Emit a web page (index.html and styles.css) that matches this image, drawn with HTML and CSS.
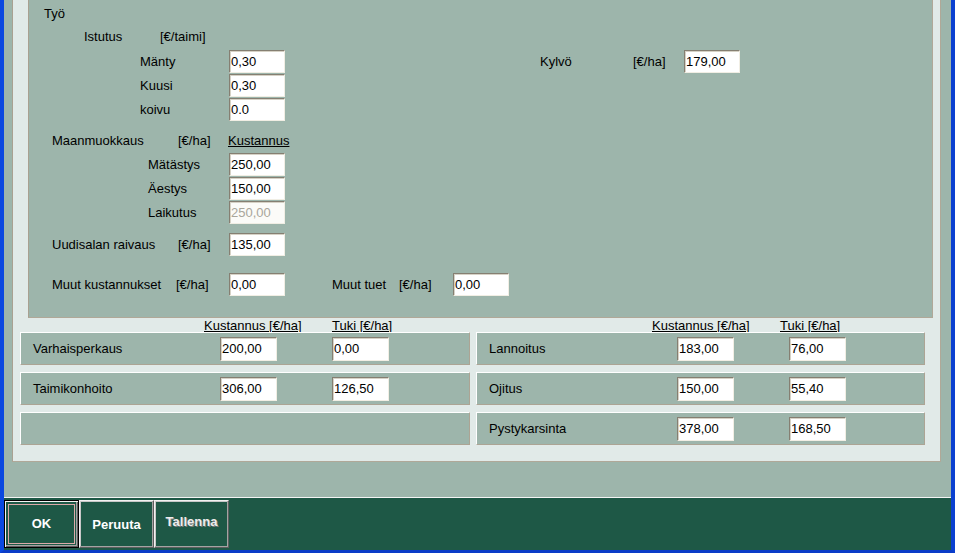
FILE: index.html
```html
<!DOCTYPE html>
<html lang="fi">
<head>
<meta charset="utf-8">
<title>Työ</title>
<link rel="stylesheet" href="styles.css">
</head>
<body>
<div class="win">
  <div class="content">
    <div class="lpanel">
      <div class="grp">
        <div class="row r-tyo"><span>Työ</span></div>
        <div class="row r-ist"><span class="w-ist">Istutus</span><span>[€/taimi]</span></div>
        <div class="row r-tree">
          <span class="w-tree">Mänty</span><input class="inp" value="0,30">
          <span class="w-kylvo">Kylvö</span><span class="w-kyha">[€/ha]</span><input class="inp" value="179,00">
        </div>
        <div class="row r-tree"><span class="w-tree">Kuusi</span><input class="inp" value="0,30"></div>
        <div class="row r-tree"><span class="w-tree">koivu</span><input class="inp" value="0.0"></div>
        <div class="row r-maan"><span class="w-maan">Maanmuokkaus</span><span class="w-maha">[€/ha]</span><span class="ul">Kustannus</span></div>
        <div class="row r-muok"><span class="w-muok">Mätästys</span><input class="inp" value="250,00"></div>
        <div class="row r-muok"><span class="w-muok">Äestys</span><input class="inp" value="150,00"></div>
        <div class="row r-muok"><span class="w-muok">Laikutus</span><input class="inp" value="250,00" disabled></div>
        <div class="row r-uud"><span class="w-maan">Uudisalan raivaus</span><span class="w-uha">[€/ha]</span><input class="inp" value="135,00"></div>
        <div class="row r-muut">
          <span class="w-muut">Muut kustannukset</span><span class="w-muha">[€/ha]</span><input class="inp" value="0,00">
          <span class="w-tuet">Muut tuet</span><span class="w-tuha">[€/ha]</span><input class="inp" value="0,00">
        </div>
      </div>
      <div class="heads">
        <div class="hcol hleft"><span class="hk ul">Kustannus [€/ha]</span><span class="ul">Tuki [€/ha]</span></div>
        <div class="hcol hright"><span class="hk ul">Kustannus [€/ha]</span><span class="ul">Tuki [€/ha]</span></div>
      </div>
      <div class="boxes">
        <div class="col">
          <div class="box"><span class="blab">Varhaisperkaus</span><input class="inp inp2" value="200,00"><input class="inp inp2 tuki" value="0,00"></div>
          <div class="box"><span class="blab">Taimikonhoito</span><input class="inp inp2" value="306,00"><input class="inp inp2 tuki" value="126,50"></div>
          <div class="box"></div>
        </div>
        <div class="col colr">
          <div class="box"><span class="blab blabr">Lannoitus</span><input class="inp inp2" value="183,00"><input class="inp inp2 tuki" value="76,00"></div>
          <div class="box"><span class="blab blabr">Ojitus</span><input class="inp inp2" value="150,00"><input class="inp inp2 tuki" value="55,40"></div>
          <div class="box"><span class="blab blabr">Pystykarsinta</span><input class="inp inp2" value="378,00"><input class="inp inp2 tuki" value="168,50"></div>
        </div>
      </div>
    </div>
  </div>
  <div class="bar">
    <div class="btn btn-ok">OK</div>
    <div class="btn">Peruuta</div>
    <div class="btn btn-dis">Tallenna</div>
  </div>
</div>
</body>
</html>
```

FILE: styles.css
```css
* { box-sizing: border-box; }
html, body { margin: 0; padding: 0; }
body {
  font-family: "Liberation Sans", Arial, sans-serif;
  font-size: 13px;
  color: #000;
  background: #0a46d8;
}
.win {
  width: 955px;
  height: 553px;
  border-left: 4px solid #0a48e0;
  border-right: 4px solid #0a40d0;
  border-bottom: 3px solid #0a3cc8;
  display: flex;
  flex-direction: column;
  overflow: hidden;
  background: #9db5ab;
}
.content {
  height: 497px;
  flex: none;
  background: #9db5ab;
  padding: 0 10px 0 8px;
}
.lpanel {
  height: 462px;
  background: #e1eae8;
  border-left: 1px solid #a9a191;
  border-right: 1px solid #b0a898;
  border-bottom: 1px solid #b0a898;
}
.grp {
  height: 318px;
  margin: 0 7px 0 15px;
  background: #9db5ab;
  border-left: 1px solid #a9a191;
  border-right: 1px solid #b0a898;
  border-bottom: 1px solid #b0a898;
}
.row { display: flex; align-items: center; white-space: nowrap; }
.row span { flex: none; }
.r-tyo { height: 26px; padding-left: 15px; }
.r-ist { height: 20px; padding-left: 55px; margin-bottom: 3px; }
.w-ist { width: 76px; }
.r-tree { height: 24px; padding-left: 111px; }
.w-tree { width: 89px; }
.w-kylvo { width: 93px; margin-left: 255px; }
.w-kyha { width: 51px; }
.r-maan { height: 20px; padding-left: 23px; margin-top: 9px; margin-bottom: 2px; }
.w-maan { width: 126px; }
.w-maha { width: 50px; }
.ul { text-decoration: underline; }
.r-muok { height: 24px; padding-left: 119px; }
.w-muok { width: 81px; }
.r-uud { height: 24px; padding-left: 23px; margin-top: 8px; }
.w-uha { width: 51px; }
.r-muut { height: 24px; padding-left: 23px; margin-top: 16px; }
.w-muut { width: 124px; }
.w-muha { width: 53px; }
.w-tuet { width: 67px; margin-left: 47px; }
.w-tuha { width: 54px; }

.inp {
  flex: none;
  width: 56px;
  height: 23px;
  margin: 1px 0 0 0;
  padding: 0 1px;
  font-family: "Liberation Sans", Arial, sans-serif;
  font-size: 13px;
  color: #000;
  background: #fff;
  border: 1px solid;
  border-color: #857f72 #f1eee4 #f1eee4 #857f72;
  box-shadow: inset 1px 1px 0 #d6d2c6;
  outline: none;
  align-self: flex-start;
}
.inp:disabled {
  color: #a9a69b;
  background: #fbfbf8;
  -webkit-text-fill-color: #a9a69b;
  opacity: 1;
}
.heads {
  display: flex;
  height: 14px;
  margin-left: 7px;
  gap: 6px;
  line-height: 14px;
  padding-top: 1px;
}
.hcol { display: flex; white-space: nowrap; }
.hleft { width: 450px; padding-left: 184px; }
.hright { width: 449px; padding-left: 176px; }
.hk { width: 128px; }

.boxes {
  display: flex;
  gap: 6px;
  margin-left: 7px;
}
.col { width: 450px; display: flex; flex-direction: column; gap: 7px; }
.colr { width: 449px; }
.box {
  height: 33px;
  background: #9db5ab;
  border: 1px solid;
  border-color: #ffffff #aca494 #aca494 #ffffff;
  display: flex;
  align-items: center;
  padding-left: 12px;
}
.blab { width: 187px; flex: none; }
.blabr { width: 188px; }
.inp2 { width: 57px; height: 24px; align-self: center; margin: 0; }
.tuki { margin-left: 55px; }

.bar {
  height: 53px;
  flex: none;
  background: #1e5846;
  border-top: 1px solid #f4f4f4;
  display: flex;
  align-items: flex-start;
  padding-top: 2px;
}
.btn {
  position: relative;
  width: 75px;
  height: 48px;
  display: flex;
  align-items: center;
  justify-content: center;
  color: #fff;
  font-weight: bold;
  font-size: 13px;
  border: 1px solid;
  border-color: #f2f2f2 #5e5e5e #5e5e5e #f2f2f2;
  box-shadow: inset -1px -1px 0 #a4a4a4, inset 1px 1px 0 #c8c8c8;
}
.btn-ok {
  border-color: #000;
  box-shadow: inset 1px 1px 0 #f2f2f2, inset -1px -1px 0 #5e5e5e, inset -2px -2px 0 #a4a4a4;
  padding-bottom: 2px;
}
.btn-ok::after {
  content: "";
  position: absolute;
  left: 3px;
  top: 3px;
  right: 3px;
  bottom: 3px;
  border: 1px solid #dba9a9;
}
.btn-dis {
  color: #ececec;
  text-shadow: 1px 1px 0 #7a7a7a;
  padding-bottom: 5px;
}
```
